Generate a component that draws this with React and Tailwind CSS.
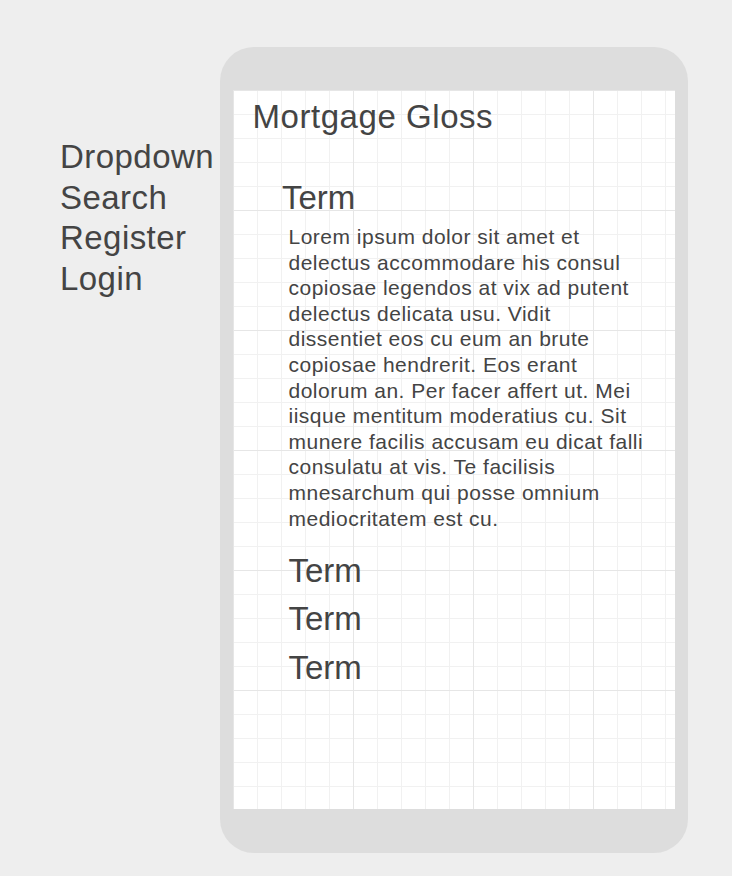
const navItems = ["Dropdown", "Search", "Register", "Login"];

const lorem =
    "Lorem ipsum dolor sit amet et delectus accommodare his consul copiosae legendos at vix ad putent delectus delicata usu. Vidit dissentiet eos cu eum an brute copiosae hendrerit. Eos erant dolorum an. Per facer affert ut. Mei iisque mentitum moderatius cu. Sit munere facilis accusam eu dicat falli consulatu at vis. Te facilisis mnesarchum qui posse omnium mediocritatem est cu.";

const App = () => {
    return (
        <div className="min-h-screen bg-[#eeeeee] flex items-start font-['Liberation_Sans',Arial,sans-serif] text-[#444444]">
            {/*Side nav*/}
            <div className="w-[220px] shrink-0 pl-[60px] pt-[137px] text-[33px] leading-[40.5px] tracking-[0.45px]">
                {navItems.map((item) => (
                    <p key={item}>{item}</p>
                ))}
            </div>

            {/*Phone*/}
            <div className="mt-[47px] w-[468px] h-[806px] shrink-0 rounded-[34px] bg-[#dddddd] pt-[43px] px-[13px] pb-[44px]">
                <div className="h-full bg-white bg-[linear-gradient(to_right,#e6e6e6_1px,transparent_1px),linear-gradient(to_bottom,#e6e6e6_1px,transparent_1px),linear-gradient(to_right,#f1f1f1_1px,transparent_1px),linear-gradient(to_bottom,#f1f1f1_1px,transparent_1px)] bg-[size:120px_120px,120px_120px,24px_24px,24px_24px]">
                    <h1 className="pl-[19.5px] pt-[6.5px] text-[33px] leading-[40px] tracking-[0.55px]">Mortgage Gloss</h1>

                    <h2 className="ml-[49px] mt-[41px] text-[33px] leading-[40px]">Term</h2>
                    <p className="ml-[55.5px] mt-[6.5px] w-[360px] text-[21px] leading-[25.6px] tracking-[0.5px]">
                        {lorem}
                    </p>

                    <div className="ml-[55.5px] mt-[16px] flex flex-col">
                        {["Term", "Term", "Term"].map((t, i) => (
                            <p key={i} className="text-[33px] leading-[48.3px]">{t}</p>
                        ))}
                    </div>
                </div>
            </div>
        </div>
    );
};

export default App;
